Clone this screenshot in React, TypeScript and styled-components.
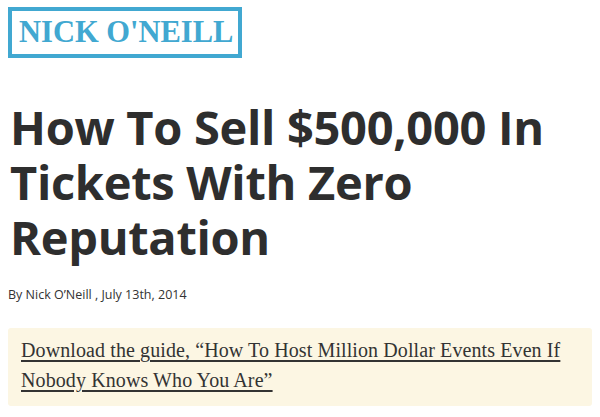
import React from "react";
import styled, { createGlobalStyle } from "styled-components";

const Global = createGlobalStyle`
  html, body { margin: 0; padding: 0; background: #fff; }
`;

const Page = styled.div`
  padding: 7px 8px 0 8px;
  display: flex;
  flex-direction: column;
  align-items: flex-start;
`;

const Logo = styled.div`
  border: 4px solid #41a8d1;
  padding: 0 6px 0 7px;
  height: 43px;
  width: 213px;
  display: flex;
  align-items: center;
  color: #41a8d1;
  font-family: "Liberation Serif", serif;
  font-weight: bold;
  font-size: 30.5px;
  white-space: nowrap;
`;

const Title = styled.h1`
  margin: 42px 0 0 2px;
  font-family: "Open Sans", sans-serif;
  font-weight: 700;
  font-size: 47px;
  line-height: 55px;
  color: #2e2e2e;
  letter-spacing: -0.3px;
  max-width: 560px;
`;

const Byline = styled.div`
  margin-top: 21px;
  font-family: "Open Sans", sans-serif;
  font-size: 12.5px;
  color: #333;
`;

const Callout = styled.div`
  margin-top: 25px;
  align-self: stretch;
  background: #fcf6e3;
  border-radius: 3px;
  padding: 7px 12px 11px 13px;
`;

const CalloutLink = styled.a`
  font-family: "Liberation Serif", serif;
  font-size: 20px;
  letter-spacing: 0.1px;
  line-height: 30px;
  color: #333;
  text-decoration: underline;
  text-underline-offset: 3px;
`;

export default function App() {
  return (
    <>
      <Global />
      <Page>
        <Logo>NICK O'NEILL</Logo>
        <Title>How To Sell $500,000 In Tickets With Zero Reputation</Title>
        <Byline>By Nick O’Neill , July 13th, 2014</Byline>
        <Callout>
          <CalloutLink href="#">
            Download the guide, “How To Host Million Dollar Events Even If Nobody Knows Who You Are”
          </CalloutLink>
        </Callout>
      </Page>
    </>
  );
}
